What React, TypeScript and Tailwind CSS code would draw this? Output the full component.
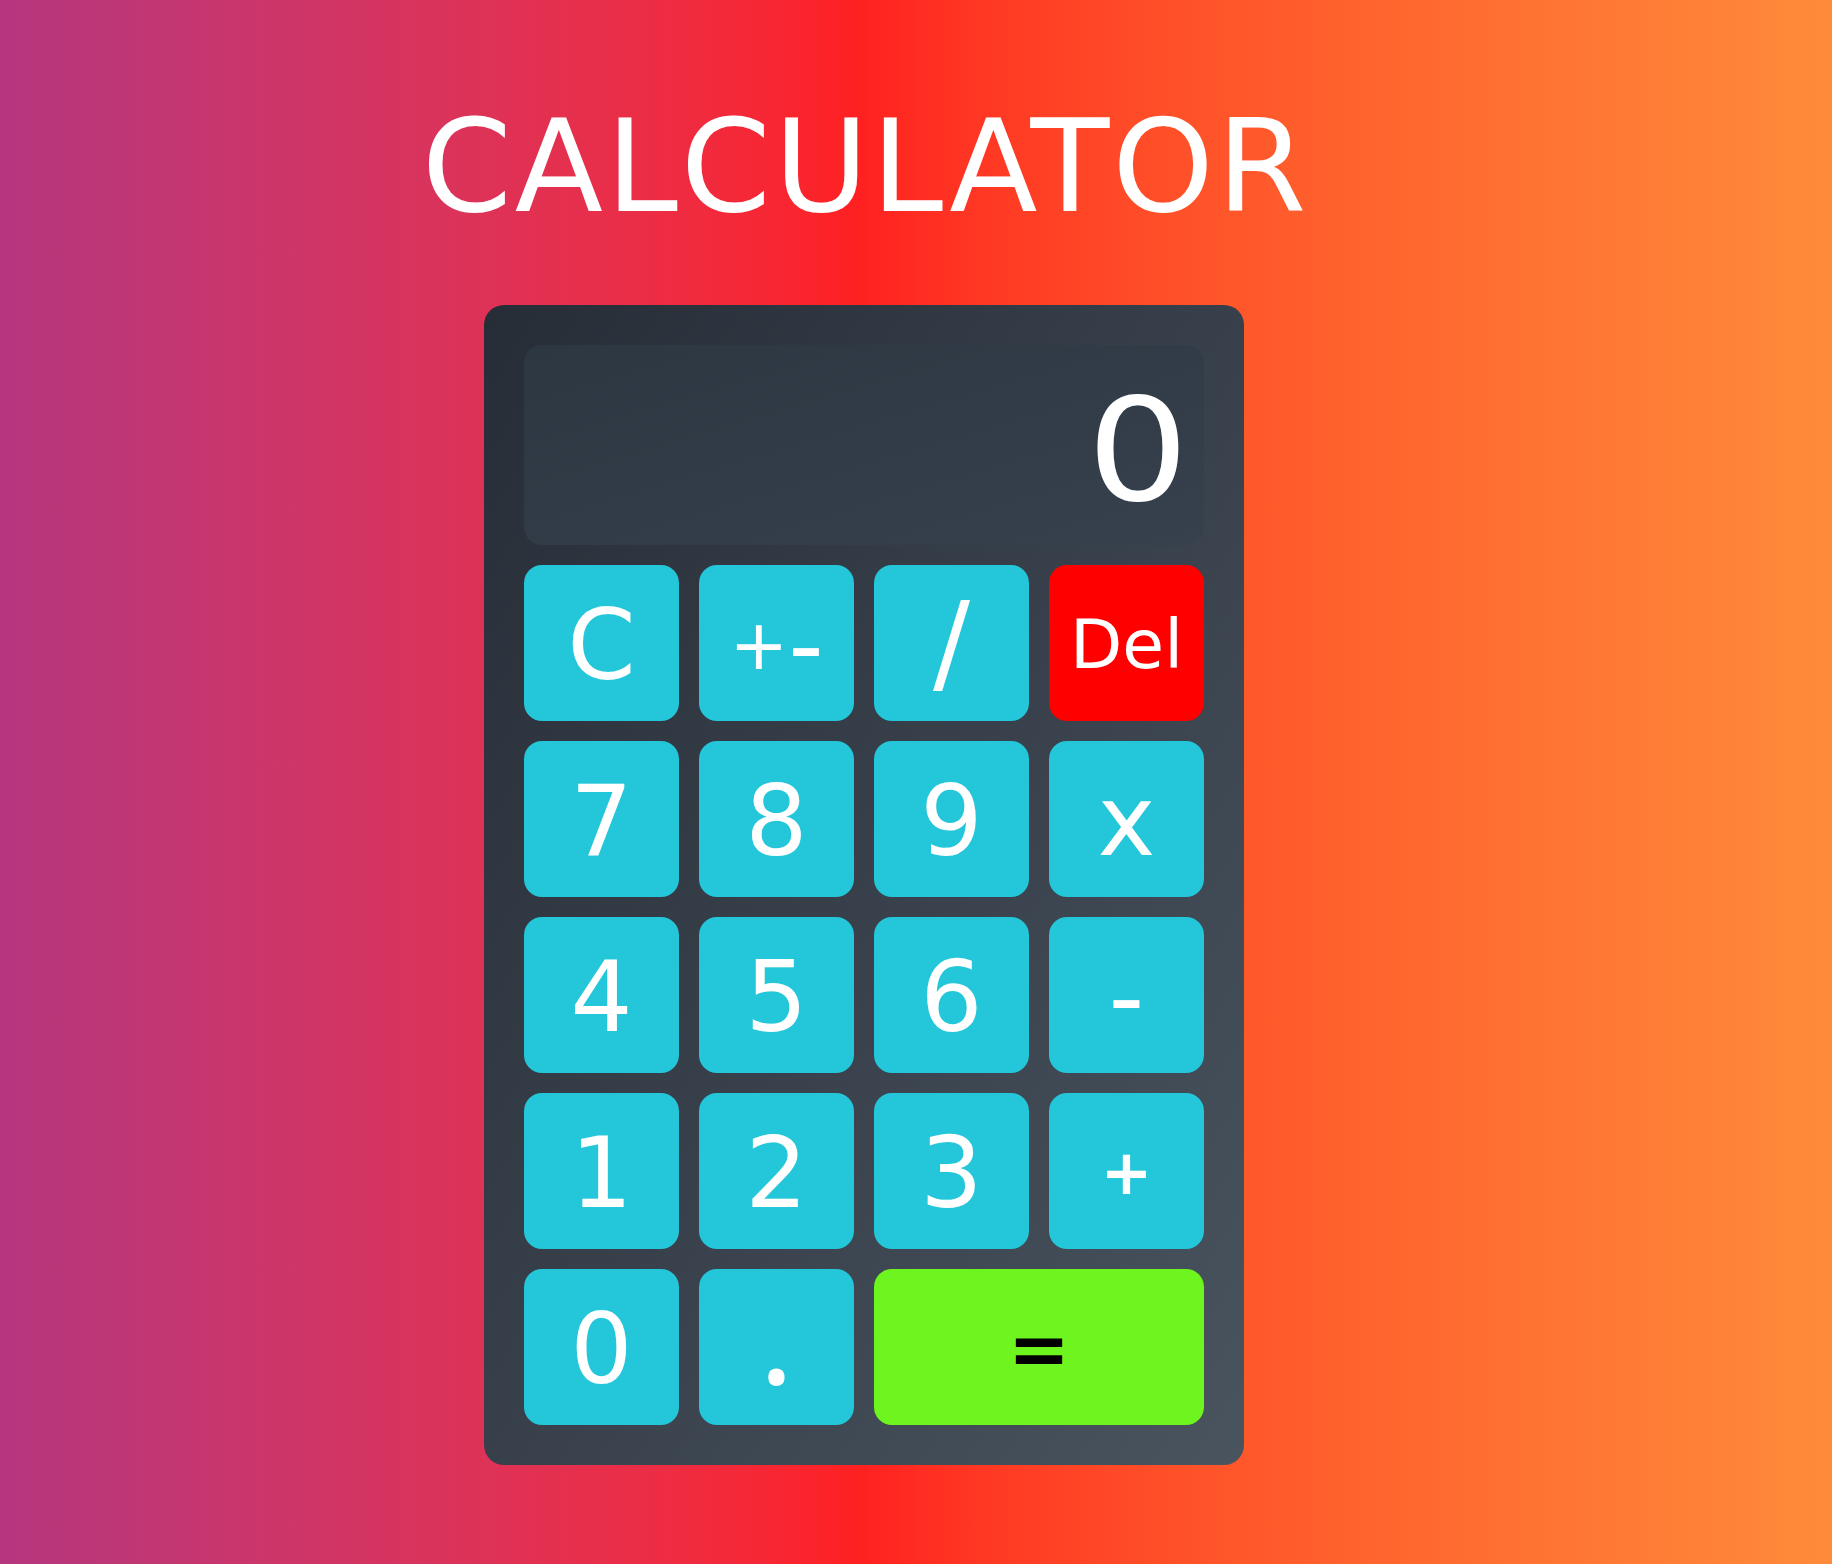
import React from "react";

type Key = {
  label: React.ReactNode;
  kind?: "num" | "del" | "eq";
  wide?: boolean;
};

const keys: Key[] = [
  { label: "C" },
  {
    label: (
      <span className="flex items-center">
        <span className="text-[70px]">+</span>
        <span>-</span>
      </span>
    ),
  },
  { label: <span className="text-[110px] pb-[4px]">/</span> },
  { label: <span className="text-[68px]">Del</span>, kind: "del" },
  { label: "7" },
  { label: "8" },
  { label: "9" },
  { label: "x" },
  { label: "4" },
  { label: "5" },
  { label: "6" },
  { label: "-" },
  { label: "1" },
  { label: "2" },
  { label: "3" },
  { label: <span className="text-[62px] font-bold">+</span> },
  { label: "0" },
  { label: <span className="text-[130px] font-['Noto_Sans',sans-serif] pb-[30px]">.</span> },
  { label: <span className="text-[74px] font-bold">=</span>, kind: "eq", wide: true },
];

export default function App() {
  return (
    <div className="min-h-screen w-full bg-linear-to-r from-[#b5367e] via-[#ff2020] via-47% to-[#ff8b3a] flex flex-col items-center pr-[104px] font-['DejaVu_Sans',sans-serif]">
      <h1 className="mt-[102px] text-[129px] leading-none text-white font-normal tracking-[3px] pl-[3px]">
        CALCULATOR
      </h1>
      <div className="mt-[74px] w-[760px] h-[1160px] rounded-[20px] p-10 bg-linear-to-br from-[#272d37] to-[#49545f]">
        <div className="h-[200px] rounded-[18px] bg-linear-to-br from-[#2d3742] to-[#37414d] flex items-center justify-end pr-[15px] pt-[10px] text-[143px] leading-none text-white">
          <span className="inline-block origin-right scale-x-[1.12]">0</span>
        </div>
        <div className="mt-5 grid grid-cols-4 gap-5">
          {keys.map((k, i) => {
            const bg =
              k.kind === "del"
                ? "bg-[#ff0000] text-white"
                : k.kind === "eq"
                ? "bg-[#6ef51f] text-black"
                : "bg-[#24c6d9] text-white";
            return (
              <button
                key={i}
                className={`${bg} ${k.wide ? "col-span-2" : ""} h-[156px] rounded-[18px] flex items-center justify-center pt-[4px] text-[98px] leading-none`}
              >
                {k.label}
              </button>
            );
          })}
        </div>
      </div>
    </div>
  );
}
